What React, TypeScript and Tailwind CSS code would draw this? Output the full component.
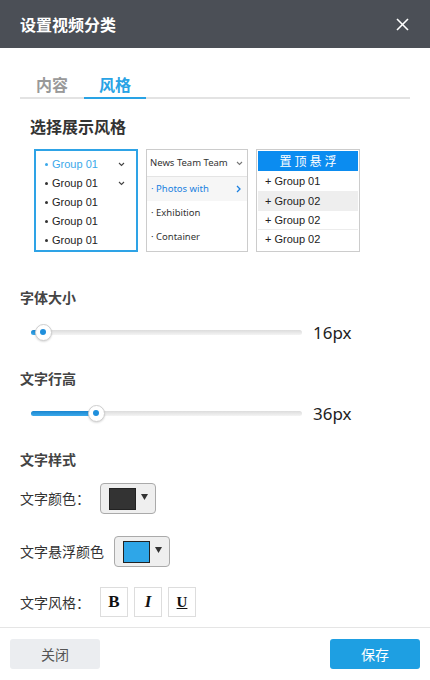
import React from "react";

const cjk = { fontFamily: '"Noto Sans CJK SC", "Noto Sans", sans-serif' };
const arial = { fontFamily: '"Liberation Sans", Arial, sans-serif' };
const noto = { fontFamily: '"Noto Sans", "Noto Sans CJK SC", sans-serif' };

function SmallChevron({ color = "#555" }: { color?: string }) {
  return (
    <svg width="7" height="5" viewBox="0 0 7 5">
      <polyline points="1,1 3.5,3.5 6,1" fill="none" stroke={color} strokeWidth="1.1" />
    </svg>
  );
}

function Slider({ pct, value }: { pct: number; value: string }) {
  return (
    <div className="flex items-center h-[20px] pl-[31px]">
      <div className="relative w-[271px] h-[5px] rounded-[3px] bg-gradient-to-b from-[#dcdcdc] to-[#f4f4f4]">
        <div
          className="absolute left-0 top-0 h-[5px] rounded-[3px] bg-gradient-to-b from-[#1a86d0] to-[#3aa9ea]"
          style={{ width: `${pct}px` }}
        />
        <div
          className="absolute top-1/2 w-[17px] h-[17px] -mt-[8.5px] -ml-[8.5px] rounded-full bg-white border border-[#cfcfcf] shadow-[0_1px_2px_rgba(0,0,0,0.15)] flex items-center justify-center"
          style={{ left: `${pct}px` }}
        >
          <div className="w-[6px] h-[6px] rounded-full bg-[#1f8fdc]" />
        </div>
      </div>
      <div className="ml-[11px] text-[17px] text-[#222] leading-none" style={noto}>
        {value}
      </div>
    </div>
  );
}

function ColorButton({ color }: { color: string }) {
  return (
    <div className="w-[56px] h-[31px] bg-[#efefef] border border-[#aaaaaa] rounded-[4px] flex items-center pl-[8px]">
      <div className="w-[27px] h-[22px] border border-[#222]" style={{ backgroundColor: color }} />
      <svg width="7" height="6" viewBox="0 0 7 6" className="ml-[5px] -mt-[4px]">
        <polygon points="0,0 7,0 3.5,6" fill="#333" />
      </svg>
    </div>
  );
}

export default function App() {
  return (
    <div className="w-[430px] h-[680px] bg-white flex flex-col text-[#333]" style={cjk}>
      {/* Header */}
      <div className="h-[48px] bg-[#4b4f56] flex items-center justify-between pl-[20px] pr-[21px] shrink-0">
        <div className="text-white text-[16px] font-bold leading-none">设置视频分类</div>
        <svg width="13" height="13" viewBox="0 0 13 13">
          <line x1="1" y1="1" x2="12" y2="12" stroke="white" strokeWidth="1.6" />
          <line x1="12" y1="1" x2="1" y2="12" stroke="white" strokeWidth="1.6" />
        </svg>
      </div>

      <div className="flex-1 flex flex-col">
        {/* Tabs */}
        <div className="mx-[20px] mt-[22px] flex border-b-2 border-[#e3e3e3]">
          <div className="w-[64px] h-[29px] -mb-[2px] border-b-2 border-transparent flex items-center justify-center text-[16px] font-bold text-[#999]">
            内容
          </div>
          <div className="w-[62px] h-[29px] -mb-[2px] border-b-2 border-[#29a3e5] flex items-center justify-center text-[16px] font-bold text-[#29a3e5]">
            风格
          </div>
        </div>

        <div className="ml-[30px] mt-[17px] h-[20px] leading-[20px] text-[16px] font-bold text-[#333]">选择展示风格</div>

        {/* Preview boxes */}
        <div className="ml-[34px] mt-[13px] flex gap-[8px]">
          <div className="w-[104px] h-[103px] border-2 border-[#2ea3e6] pt-[4px] pl-[9px] pr-[11px]" style={arial}>
            {["Group 01", "Group 01", "Group 01", "Group 01", "Group 01"].map((t, i) => (
              <div key={i} className="h-[19px] flex items-center text-[11px]">
                <span className={`w-[3px] h-[3px] rounded-full ${i === 0 ? "bg-[#3aa8ea]" : "bg-[#333]"}`} />
                <span className={`ml-[4px] flex-1 ${i === 0 ? "text-[#3aa8ea]" : "text-[#222]"}`}>{t}</span>
                {i < 2 && <SmallChevron color="#444" />}
              </div>
            ))}
          </div>

          <div className="w-[102px] h-[103px] border border-[#cccccc] flex flex-col whitespace-nowrap" style={noto}>
            <div className="h-[27px] flex items-center justify-between pl-[3px] pr-[4px] border-b border-[#e4e4e4] text-[9.5px] text-[#333]">
              <span>News Team Team</span>
              <SmallChevron color="#777" />
            </div>
            <div className="h-[24px] bg-[#f6f6f6] flex items-center justify-between pl-[4px] pr-[6px] text-[9.5px] text-[#1a7fe0]">
              <span>· Photos with</span>
              <svg width="5" height="8" viewBox="0 0 5 8">
                <polyline points="1,1 4,4 1,7" fill="none" stroke="#1a7fe0" strokeWidth="1.3" />
              </svg>
            </div>
            <div className="h-[24px] flex items-center pl-[4px] text-[9.5px] text-[#333]">· Exhibition</div>
            <div className="h-[24px] flex items-center pl-[4px] text-[9.5px] text-[#333]">· Container</div>
          </div>

          <div className="w-[104px] h-[103px] border border-[#cccccc] p-[1px] flex flex-col" style={arial}>
            <div className="h-[20px] bg-[#0b8cf0] text-white text-[12px] flex items-center justify-center tracking-[3px] pl-[3px]" style={cjk}>
              置顶悬浮
            </div>
            <div className="h-[20px] flex items-center pl-[7px] text-[11px] text-[#222]">+ Group 01</div>
            <div className="h-[20px] bg-[#eeeeee] flex items-center pl-[7px] text-[11px] text-[#222]">+ Group 02</div>
            <div className="h-[19px] flex items-center pl-[7px] text-[11px] text-[#222] border-b border-[#ececec]">+ Group 02</div>
            <div className="h-[19px] flex items-center pl-[7px] text-[11px] text-[#222]">+ Group 02</div>
          </div>
        </div>

        {/* Font size */}
        <div className="ml-[20px] mt-[35px] h-[20px] leading-[20px] text-[14px] font-bold text-[#444]">字体大小</div>
        <div className="mt-[15px]">
          <Slider pct={12} value="16px" />
        </div>

        <div className="ml-[20px] mt-[26px] h-[20px] leading-[20px] text-[14px] font-bold text-[#444]">文字行高</div>
        <div className="mt-[15px]">
          <Slider pct={65} value="36px" />
        </div>

        <div className="ml-[20px] mt-[26px] h-[20px] leading-[20px] text-[14px] font-bold text-[#444]">文字样式</div>

        <div className="ml-[20px] mt-[14px] flex items-center">
          <div className="w-[80px] text-[14px] text-[#333]">文字颜色：</div>
          <ColorButton color="#333333" />
        </div>

        <div className="ml-[20px] mt-[22px] flex items-center">
          <div className="text-[14px] text-[#333]">文字悬浮颜色</div>
          <div className="ml-[10px]">
            <ColorButton color="#2ea6e8" />
          </div>
        </div>

        <div className="ml-[20px] mt-[20px] flex items-center">
          <div className="w-[80px] text-[14px] text-[#333]">文字风格：</div>
          <div className="flex gap-[6px]" style={{ fontFamily: '"Liberation Serif", "Times New Roman", serif' }}>
            <div className="w-[28px] h-[30px] border border-[#dddddd] flex items-center justify-center text-[17px] font-bold text-[#111]">B</div>
            <div className="w-[28px] h-[30px] border border-[#dddddd] flex items-center justify-center text-[17px] font-bold italic text-[#111]">I</div>
            <div className="w-[28px] h-[30px] border border-[#dddddd] flex items-center justify-center text-[15px] font-bold underline text-[#111]">U</div>
          </div>
        </div>
      </div>

      {/* Footer */}
      <div className="h-[53px] border-t border-[#e5e5e5] flex items-start justify-between px-[10px] pt-[11px] shrink-0">
        <div className="w-[90px] h-[30px] rounded-[3px] bg-[#ebedf0] flex items-center justify-center text-[14px] text-[#555]">关闭</div>
        <div className="w-[90px] h-[30px] rounded-[3px] bg-[#1e9fe2] flex items-center justify-center text-[14px] text-white">保存</div>
      </div>
    </div>
  );
}
